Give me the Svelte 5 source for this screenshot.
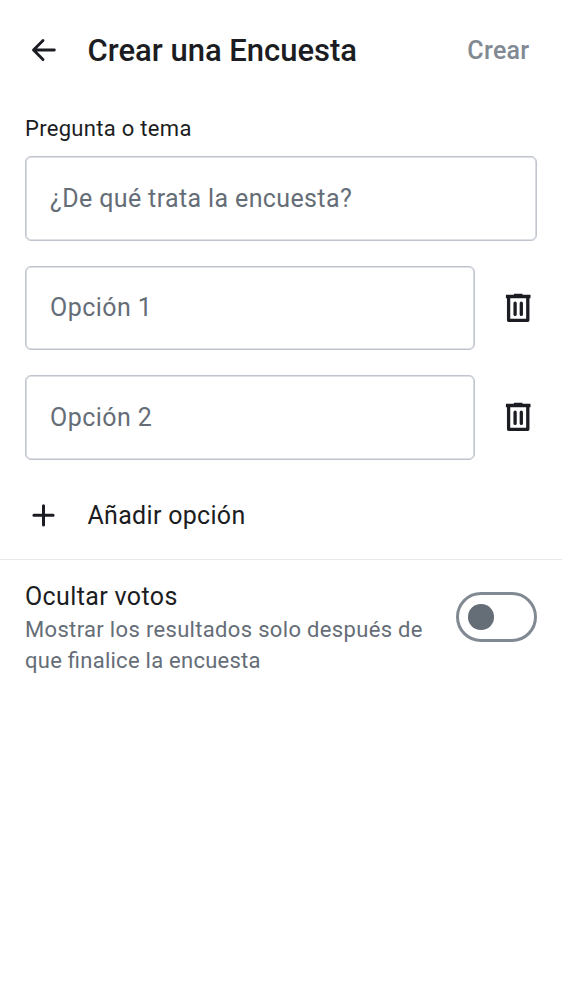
<script>
  let options = ['Opción 1', 'Opción 2'];
</script>

<div class="screen">
  <header>
    <svg class="ico" viewBox="0 0 37 37"><path d="M29.3 18H8.7M18 8.5L8.5 18L18 27.5" /></svg>
    <h1>Crear una Encuesta</h1>
    <span class="create">Crear</span>
  </header>
  <main>
    <div class="label">Pregunta o tema</div>
    <div class="field"><span>¿De qué trata la encuesta?</span></div>
    {#each options as option}
      <div class="row">
        <div class="field"><span>{option}</span></div>
        <svg class="trash" viewBox="0 0 26 30">
          <path class="lid" d="M0.9 3.5H25.5M8.9 2.4H17.5" />
          <path d="M3.6 4V27.3H22.8V4M10.1 10.2V21.4M16.3 10.2V21.4" />
        </svg>
      </div>
    {/each}
    <div class="add">
      <svg class="plus" viewBox="0 0 24 24"><path d="M11.5 2.7V21.9M1.9 12.3H21.1" /></svg>
      <span>Añadir opción</span>
    </div>
  </main>
  <section>
    <div class="copy">
      <div class="title">Ocultar votos</div>
      <p>Mostrar los resultados solo después de<br /><span>que finalice la encuesta</span></p>
    </div>
    <div class="switch"><i></i></div>
  </section>
</div>

<style>
  :global(body) { background: #fff; }
  .screen { height: 1000px; font-family: Roboto, sans-serif; color: #1b1d22; overflow: hidden; font-feature-settings: "liga" 1; }
  svg { fill: none; stroke: #1b1d22; stroke-linecap: round; stroke-linejoin: round; flex: none; }
  header { height: 100px; display: flex; align-items: center; padding: 0 32.5px 0 25px; box-sizing: border-box; }
  .ico { width: 37px; height: 37px; stroke-width: 2.9; }
  h1 { margin: 0 0 0 25.5px; padding-top: 1px; font-size: 31px; font-weight: 500; line-height: 40px; white-space: nowrap; }
  .create { margin-left: auto; line-height: 30px; padding-top: 1px; font-size: 25px; font-weight: 500; letter-spacing: 0.3px; color: #818993; }
  main { padding: 0 25px; }
  .label { height: 56px; line-height: 57px; font-size: 22px; letter-spacing: 0.3px; }
  .field { height: 84.5px; box-sizing: border-box; border: 1px solid #bfc4ce; box-shadow: inset 0 0 0 0.6px #bfc4ce; border-radius: 6px; padding: 0 24px; display: flex; align-items: center; font-size: 25px; letter-spacing: 0.37px; color: #656d77; }
  .row { display: flex; align-items: center; margin-top: 25px; }
  .row .field { width: 450px; letter-spacing: 0.45px; }
  .trash { width: 26px; height: 30px; margin-left: 30px; stroke-width: 3.3; }
  .lid { stroke-linecap: butt; }
  .add { height: 99.5px; display: flex; align-items: center; padding: 12px 0 0 6.5px; box-sizing: border-box; font-size: 25px; letter-spacing: 0.3px; }
  .plus { width: 24px; height: 24px; stroke-width: 3; margin-right: 32px; }
  section { border-top: 1px solid #e8e9ec; padding: 20px 25px; display: flex; justify-content: space-between; }
  .title { font-size: 25px; line-height: 33px; letter-spacing: 0.37px; }
  p { margin: 0.6px 0 0; font-size: 22px; line-height: 31.2px; letter-spacing: 0.33px; color: #656d77; white-space: nowrap; }
  p span { letter-spacing: 0.26px; }
  .switch { width: 81px; height: 50px; box-sizing: border-box; border: 3px solid #818993; border-radius: 25px; margin-top: 12px; display: flex; align-items: center; padding-left: 9px; }
  .switch i { width: 25.5px; height: 25.5px; border-radius: 50%; background: #656d77; }
</style>
